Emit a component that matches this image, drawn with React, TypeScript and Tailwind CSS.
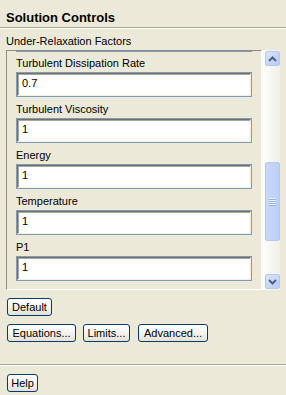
import React from "react";

const fields = [
  { label: "Turbulent Dissipation Rate", value: "0.7" },
  { label: "Turbulent Viscosity", value: "1" },
  { label: "Energy", value: "1" },
  { label: "Temperature", value: "1" },
  { label: "P1", value: "1" },
];

function XpButton({ label, className = "" }: { label: string; className?: string }) {
  return (
    <button
      className={`h-[18px] flex items-center justify-center border border-[#003c74] rounded-[3px] bg-linear-to-b from-white via-[#f4f3ee] to-[#e3e1d6] text-[11px] leading-none text-black ${className}`}
    >
      {label}
    </button>
  );
}

function Arrow({ up }: { up?: boolean }) {
  return (
    <svg width="9" height="6" viewBox="0 0 9 6" className={up ? "" : "rotate-180"}>
      <path d="M1 5 L4.5 1.5 L8 5" fill="none" stroke="#4d6185" strokeWidth="2" />
    </svg>
  );
}

function ScrollBtn({ up }: { up?: boolean }) {
  return (
    <div className="flex items-center justify-center w-[15px] h-[15px] rounded-[2px] border border-[#b4c8f6] bg-linear-to-br from-[#dbe5fd] to-[#b6cbfa]">
      <Arrow up={up} />
    </div>
  );
}

export default function App() {
  return (
    <div className="w-[286px] h-[395px] overflow-hidden bg-[#ece9d8] text-black font-['Liberation_Sans',Arial,sans-serif]">
      <div className="h-[27px] pt-[10px] px-[6px] text-[13px] font-bold leading-[16px]">Solution Controls</div>
      <div className="h-px bg-[#aca899]" />
      <div className="h-px bg-white" />
      <div className="pt-[5px] px-[6px] text-[11px] leading-[14px]">Under-Relaxation Factors</div>

      <div className="flex mt-[2px] ml-[6px] h-[240px]">
        <div className="w-[256px] h-full overflow-hidden border-t border-l border-t-[#8f8d83] border-l-[#8f8d83] border-r border-b border-r-white border-b-white px-[9px]">
          <div className="h-px bg-[#7f9db9]" />
          {fields.map((f, i) => (
            <div key={f.label}>
              <div className={`${i === 0 ? "h-[20px]" : "h-[21px]"} flex items-end pb-[2px] text-[11px] leading-[14px]`}>
                {f.label}
              </div>
              <div className="h-[25px] border border-[#7f9db9] bg-white">
                <div className="h-full border-t border-l border-t-[#716f64] border-l-[#716f64] border-r border-b border-r-[#f1efe2] border-b-[#f1efe2] shadow-[inset_1px_1px_0_#aca899] flex items-center pl-[4px] pb-[2px] text-[11px]">
                  {f.value}
                </div>
              </div>
            </div>
          ))}
        </div>

        <div className="w-[18px] h-full flex flex-col items-end py-[1px] bg-linear-to-r from-[#fefefb] to-[#f0efe8]">
          <ScrollBtn up />
          <div className="flex-1 w-[15px]">
            <div className="mt-[96px] h-[79px] rounded-[2px] border border-[#b4c8f6] bg-linear-to-r from-[#c9d7fc] to-[#bccffa] flex flex-col items-center justify-center gap-[1px]">
              {[0, 1, 2, 3].map((k) => (
                <div key={k} className="w-[7px] h-px bg-[#eef4fe] shadow-[0_1px_0_#8cb0f8]" />
              ))}
            </div>
          </div>
          <ScrollBtn />
        </div>
      </div>

      <div className="px-[7px]">
        <XpButton label="Default" className="mt-[8px] w-[45px]" />
        <div className="flex mt-[8px]">
          <XpButton label="Equations..." className="w-[69px]" />
          <XpButton label="Limits..." className="w-[47px] ml-[7px]" />
          <XpButton label="Advanced..." className="w-[70px] ml-[8px]" />
        </div>
      </div>
      <div className="mt-[22px] h-px bg-[#aca899]" />
      <div className="h-px bg-white" />
      <div className="px-[7px]">
        <XpButton label="Help" className="mt-[8px] w-[31px]" />
      </div>
    </div>
  );
}
